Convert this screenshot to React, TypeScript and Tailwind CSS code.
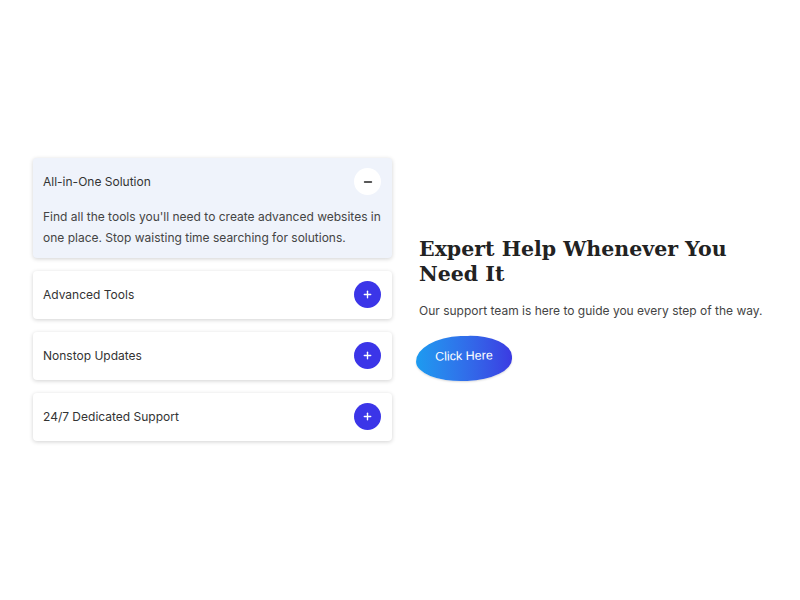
import { Minus, Plus } from 'lucide-react';

const items = [
  {
    title: 'All-in-One Solution',
    body: "Find all the tools you'll need to create advanced websites in one place. Stop waisting time searching for solutions.",
    open: true,
  },
  { title: 'Advanced Tools', body: '', open: false },
  { title: 'Nonstop Updates', body: '', open: false },
  { title: '24/7 Dedicated Support', body: '', open: false },
];

export default function App() {
  return (
    <div
      className="min-h-screen w-full bg-white flex items-center pl-[33px] pr-[22px]"
      style={{ fontFamily: 'Inter, "Noto Sans", sans-serif' }}
    >
      <div className="flex items-center gap-[27px] w-full pb-[2px]">
        {/* Accordion */}
        <div className="w-[359px] flex flex-col gap-[13px] shrink-0">
          {items.map((item) => (
            <div
              key={item.title}
              className={`rounded-[4px] shadow-[0_1px_4px_rgba(0,0,0,0.18)] ${
                item.open ? 'bg-[#eff3fb]' : 'bg-white'
              }`}
            >
              <div className="flex items-center justify-between h-[48px] pl-[10px] pr-[11px]">
                <span className="text-[12px] text-[#333]">{item.title}</span>
                {item.open ? (
                  <span className="w-[27px] h-[27px] rounded-full bg-white flex items-center justify-center">
                    <Minus size={12} strokeWidth={2.75} color="#222" />
                  </span>
                ) : (
                  <span className="w-[27px] h-[27px] rounded-full bg-[#3b35e8] flex items-center justify-center">
                    <Plus size={11} strokeWidth={3} color="#fff" />
                  </span>
                )}
              </div>
              {item.open && (
                <p className="px-[10px] pb-[10px] pt-[0px] text-[12px] leading-[21px] text-[#444]">
                  {item.body}
                </p>
              )}
            </div>
          ))}
        </div>

        {/* CTA */}
        <div className="flex-1 pt-[20px]">
          <h2
            className="text-[20.5px] leading-[25px] font-bold text-[#222]"
            style={{ fontFamily: '"DejaVu Serif", "Liberation Serif", serif' }}
          >
            Expert Help Whenever You Need It
          </h2>
          <p className="mt-[15px] text-[12px] text-[#444]">
            Our support team is here to guide you every step of the way.
          </p>
          <button
            className="mt-[16px] -ml-[3px] w-[96px] h-[45px] pb-[4px] text-white text-[12.5px] bg-gradient-to-r from-[#1c9bf0] to-[#3b3ae2] rounded-[50%_48%_50%_52%/58%_50%_50%_48%] rotate-[-1.5deg] shadow-[0_1px_2px_rgba(0,0,0,0.15)]"
            style={{ fontFamily: '"Liberation Sans", Arial, sans-serif' }}
          >
            Click Here
          </button>
        </div>
      </div>
    </div>
  );
}
